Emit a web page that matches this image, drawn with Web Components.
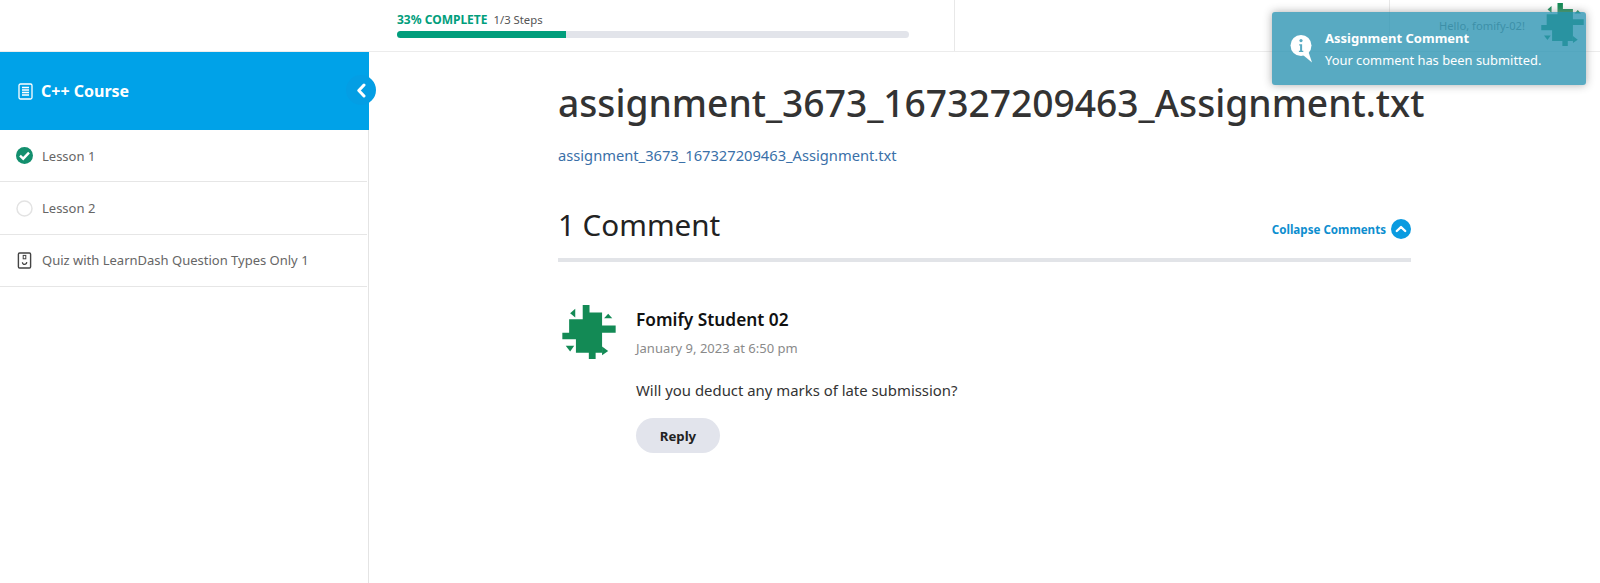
<!DOCTYPE html>
<html lang="en">
<head>
<meta charset="utf-8">
<title>Assignment</title>
<style>
html, body { margin: 0; height: 100%; background: #fff; font-family: "Noto Sans", "Open Sans", sans-serif; }
body { height: 583px; overflow: hidden; position: relative; }
</style>
</head>
<body>
<app-shell>
	<top-bar slot="top"></top-bar>
	<course-sidebar slot="side" title="C++ Course">
		<lesson-row kind="done">Lesson 1</lesson-row>
		<lesson-row kind="open">Lesson 2</lesson-row>
		<lesson-row kind="quiz">Quiz with LearnDash Question Types Only 1</lesson-row>
	</course-sidebar>
	<assignment-view slot="main"></assignment-view>
</app-shell>
<toast-note heading="Assignment Comment">Your comment has been submitted.</toast-note>

<script>
class IdentIcon extends HTMLElement {
	connectedCallback() {
		const size = this.getAttribute('size') || 54;
		const shadow = this.attachShadow({ mode: 'open' });
		shadow.innerHTML = `
		<style>
			:host { display: block; width: ${size}px; height: ${size}px; }
			svg { display: block; width: 100%; height: 100%; }
		</style>
		<svg viewBox="36 47 159 156" preserveAspectRatio="none" fill="#138a55">
			<polygon points="97,47 117,47 117,69 154,69 154,106 194,106 194,127 154,127 154,185 135,185 135,203 115,203 115,185 77,185 77,146 37,146 37,127 57,127 57,88 97,88"/>
			<polygon points="75,58 75,83 60,71"/>
			<polygon points="160,85 184,85 172,72"/>
			<polygon points="47,165 72,165 60,181"/>
			<polygon points="154,167 154,192 172,180"/>
		</svg>`;
	}
}
customElements.define('ident-icon', IdentIcon);

class AppShell extends HTMLElement {
	connectedCallback() {
		const shadow = this.attachShadow({ mode: 'open' });
		shadow.innerHTML = `
		<style>
			:host { display: grid; grid-template-columns: 369px 1fr; grid-template-rows: 52px 531px; height: 583px; }
			.top { grid-column: 1 / 3; }
		</style>
		<div class="top"><slot name="top"></slot></div>
		<slot name="side"></slot>
		<slot name="main"></slot>`;
	}
}
customElements.define('app-shell', AppShell);

class TopBar extends HTMLElement {
	connectedCallback() {
		const shadow = this.attachShadow({ mode: 'open' });
		shadow.innerHTML = `
		<style>
			:host { display: flex; height: 52px; box-sizing: border-box; border-bottom: 1px solid #ececec; }
			.progress { width: 558px; margin-left: 397px; border-right: 1px solid #e8e8e8; box-sizing: border-box; padding-top: 12px; }
			.label { display: flex; align-items: baseline; gap: 6px; height: 19px; font-size: 11.3px; line-height: 15px; color: #555; }
			b { color: #019e7c; font-size: 12px; font-weight: 700; }
			.track { width: 512px; height: 7px; background: #e2e4ea; border-radius: 4px; overflow: hidden; }
			.fill { width: 169px; height: 100%; background: #019e7c; }
			.spacer { width: 435px; border-right: 1px solid #e8e8e8; box-sizing: border-box; }
			.user { flex: 1; display: flex; justify-content: flex-end; align-items: flex-start; gap: 16px; padding: 3px 16px 0 0; position: relative; }
			.hello { font-size: 11.2px; color: #777; margin-top: 15px; }
		</style>
		<div class="progress">
			<div class="label"><b>33% COMPLETE</b><span>1/3 Steps</span></div>
			<div class="track"><div class="fill"></div></div>
		</div>
		<div class="spacer"></div>
		<div class="user"><span class="hello">Hello, fomify-02!</span><ident-icon size="43"></ident-icon></div>`;
	}
}
customElements.define('top-bar', TopBar);

class CourseSidebar extends HTMLElement {
	connectedCallback() {
		const shadow = this.attachShadow({ mode: 'open' });
		shadow.innerHTML = `
		<style>
			:host { display: block; height: 531px; border-right: 1px solid #e4e4e4; box-sizing: border-box; width: 369px; }
			.head { position: relative; display: flex; align-items: center; gap: 8px; height: 78px; margin-right: -1px; padding-left: 18px; background: #00a2e8; color: #fff; font-size: 16px; font-weight: 700; }
			.head svg { display: block; }
			.toggle { position: absolute; right: -7px; top: 23px; width: 30px; height: 30px; border-radius: 50%; background: #049ee4; display: flex; align-items: center; justify-content: center; }
		</style>
		<div class="head">
			<svg width="15" height="17" viewBox="0 0 15 17" fill="none" stroke="#fff" stroke-width="1.3">
				<rect x="1" y="1" width="13" height="15" rx="1.5"/>
				<path d="M4 4.5h7M4 7h7M4 9.5h7M4 12h7"/>
			</svg>
			<span>${this.getAttribute('title')}</span>
			<div class="toggle">
				<svg width="11" height="15" viewBox="0 0 11 15" fill="none" stroke="#fff" stroke-width="3" stroke-linecap="round" stroke-linejoin="round"><path d="M8 2L2.8 7.5 8 13"/></svg>
			</div>
		</div>
		<slot></slot>`;
		this.removeAttribute('title');
	}
}
customElements.define('course-sidebar', CourseSidebar);

class LessonRow extends HTMLElement {
	icon() {
		const kind = this.getAttribute('kind');
		if (kind === 'done') {
			return `<svg width="17" height="17" viewBox="0 0 17 17"><circle cx="8.5" cy="8.5" r="8.5" fill="#138f6e"/><path d="M4 8.7l3.2 3L13 5.6" fill="none" stroke="#fff" stroke-width="2.4"/></svg>`;
		}
		if (kind === 'open') {
			return `<svg width="17" height="17" viewBox="0 0 17 17"><circle cx="8.5" cy="8.5" r="7.5" fill="#fff" stroke="#e3e3e3" stroke-width="1.5"/></svg>`;
		}
		return `<svg width="17" height="17" viewBox="0 0 17 17" fill="none" stroke="#444"><rect x="2.4" y="1" width="12.2" height="15" rx="1.2" stroke-width="1.4"/><rect x="7.2" y="3.4" width="2.6" height="3.4" stroke-width="1"/><path d="M6.4 10.2c.2 3 4 3 4.4 0" stroke-width="1.2"/></svg>`;
	}
	connectedCallback() {
		const shadow = this.attachShadow({ mode: 'open' });
		shadow.innerHTML = `
		<style>
			:host { display: flex; align-items: center; gap: 9px; height: 52.4px; box-sizing: border-box; padding-left: 16px; margin-right: 1px; border-bottom: 1px solid #e6e6e6; font-size: 13px; color: #666; }
			svg { display: block; flex: none; }
		</style>
		${this.icon()}<slot></slot>`;
	}
}
customElements.define('lesson-row', LessonRow);

class AssignmentView extends HTMLElement {
	connectedCallback() {
		const shadow = this.attachShadow({ mode: 'open' });
		shadow.innerHTML = `
		<style>
			:host { display: block; padding: 23px 0 0 189px; width: 853px; box-sizing: content-box; }
			h1 { margin: 0; font-size: 37.2px; line-height: 56px; font-weight: 500; color: #333; white-space: nowrap; }
			a { display: block; margin-top: 13px; font-size: 14.7px; line-height: 22px; color: #3a70a8; text-decoration: none; }
			.bar { display: flex; justify-content: space-between; align-items: center; margin-top: 37px; height: 44px; padding-bottom: 11px; border-bottom: 4px solid #e2e4e8; }
			h2 { margin: 0; font-size: 29.6px; line-height: 44px; font-weight: 400; color: #222; }
			.collapse { display: flex; align-items: center; gap: 5px; margin-right: 0; padding-top: 8px; font-size: 11.6px; font-weight: 700; color: #0d8ecf; }
			.collapse svg { display: block; }
		</style>
		<h1>assignment_3673_167327209463_Assignment.txt</h1>
		<a href="#">assignment_3673_167327209463_Assignment.txt</a>
		<div class="bar">
			<h2>1 Comment</h2>
			<div class="collapse">Collapse Comments
				<svg width="20" height="20" viewBox="0 0 20 20"><circle cx="10" cy="10" r="10" fill="#0a9be0"/><path d="M5.8 12l4.2-4 4.2 4" fill="none" stroke="#fff" stroke-width="2.4" stroke-linecap="round" stroke-linejoin="round"/></svg>
			</div>
		</div>
		<comment-item author="Fomify Student 02" date="January 9, 2023 at 6:50 pm">Will you deduct any marks of late submission?</comment-item>`;
	}
}
customElements.define('assignment-view', AssignmentView);

class CommentItem extends HTMLElement {
	connectedCallback() {
		const shadow = this.attachShadow({ mode: 'open' });
		shadow.innerHTML = `
		<style>
			:host { display: flex; padding: 43px 0 0 4px; }
			ident-icon { flex: none; margin-right: 20px; }
			.name { font-size: 17.3px; font-weight: 600; line-height: 24px; color: #111; margin-top: 3px; }
			.date { font-size: 13px; line-height: 20px; color: #8a8a8a; margin-top: 6px; }
			.text { font-size: 14.9px; line-height: 24px; color: #333; margin-top: 20px; }
			button { display: block; margin-top: 16px; width: 84px; height: 35px; border: 0; border-radius: 17.5px; background: #e2e4ec; font: 700 13.2px "Noto Sans", sans-serif; color: #222; padding: 0; }
		</style>
		<ident-icon size="54"></ident-icon>
		<div>
			<div class="name">${this.getAttribute('author')}</div>
			<div class="date">${this.getAttribute('date')}</div>
			<div class="text"><slot></slot></div>
			<button type="button">Reply</button>
		</div>`;
	}
}
customElements.define('comment-item', CommentItem);

class ToastNote extends HTMLElement {
	connectedCallback() {
		const shadow = this.attachShadow({ mode: 'open' });
		shadow.innerHTML = `
		<style>
			:host { position: absolute; top: 12px; right: 14px; width: 314px; height: 73px; box-sizing: border-box; display: flex; align-items: center; gap: 11px; padding-left: 18px; background: #2f96b4; opacity: .8; border-radius: 3px; box-shadow: 0 0 8px #999; color: #fff; }
			svg { display: block; flex: none; }
			.heading { font-size: 13px; font-weight: 700; line-height: 20px; margin-top: 1px; }
			.body { font-size: 12.9px; line-height: 22px; margin-top: 1px; }
		</style>
		<svg width="24" height="29" viewBox="0 0 24 29"><circle cx="11" cy="11.5" r="10.5" fill="#fff"/><path d="M13 21l9 7.5-4-12z" fill="#fff"/><path d="M9.2 10.2h2.9v6.6h1.2v1.2H8.9v-1.2h1.2v-5.4h-.9z" fill="#2f96b4"/><circle cx="11" cy="6.6" r="1.6" fill="#2f96b4"/></svg>
		<div>
			<div class="heading">${this.getAttribute('heading')}</div>
			<div class="body"><slot></slot></div>
		</div>`;
	}
}
customElements.define('toast-note', ToastNote);
</script>
</body>
</html>
